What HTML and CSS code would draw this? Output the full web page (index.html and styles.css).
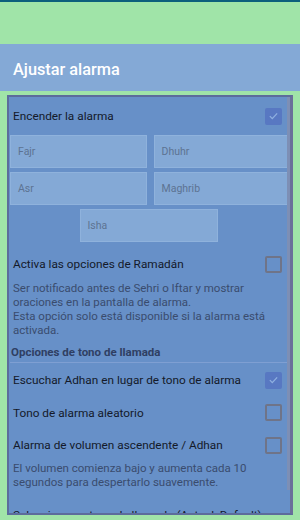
FILE: index.html
```html
<!DOCTYPE html>
<html lang="es">
  <head>
    <meta charset="UTF-8" />
    <meta name="viewport" content="width=device-width, initial-scale=1.0" />
    <title>Ajustar alarma</title>
    <link rel="stylesheet" href="styles.css">
  </head>
  <body>
    <div class="status-line"></div>
    <div class="status-space"></div>
    <header class="app-bar">Ajustar alarma</header>

    <div class="panel">
      <div class="scroll-thumb"></div>

      <div class="row row-first">
        <span class="row-title">Encender la alarma</span>
        <span class="check checked">
          <svg viewBox="0 0 16 16" width="16" height="16"><path d="M3.5 8.2l3 3 6-6.4" fill="none" stroke="#8fb0e0" stroke-width="1.6"/></svg>
        </span>
      </div>

      <div class="prayer-grid">
        <div class="prayer-field">Fajr</div>
        <div class="prayer-field">Dhuhr</div>
        <div class="prayer-field">Asr</div>
        <div class="prayer-field">Maghrib</div>
        <div class="prayer-field single">Isha</div>
      </div>

      <div class="row row-ramadan">
        <span class="row-title">Activa las opciones de Ramadán</span>
        <span class="check"></span>
      </div>
      <p class="summary">Ser notificado antes de Sehri o Iftar y mostrar oraciones en la pantalla de alarma.<br>Esta opción solo está disponible si la alarma está activada.</p>

      <div class="section-title">Opciones de tono de llamada</div>

      <div class="row">
        <span class="row-title">Escuchar Adhan en lugar de tono de alarma</span>
        <span class="check checked">
          <svg viewBox="0 0 16 16" width="16" height="16"><path d="M3.5 8.2l3 3 6-6.4" fill="none" stroke="#8fb0e0" stroke-width="1.6"/></svg>
        </span>
      </div>
      <div class="row row-random">
        <span class="row-title">Tono de alarma aleatorio</span>
        <span class="check"></span>
      </div>
      <div class="row">
        <span class="row-title">Alarma de volumen ascendente / Adhan</span>
        <span class="check"></span>
      </div>
      <p class="summary summary-volume">El volumen comienza bajo y aumenta cada 10 segundos para despertarlo suavemente.</p>

      <div class="row row-tone">
        <span class="row-title">Selecciona un tono de llamada (Actual: Default)</span>
      </div>
    </div>
  </body>
</html>
```

FILE: styles.css
```css
body {
  margin: 0;
  width: 300px;
  height: 520px;
  overflow: hidden;
  background: #a0e4a8;
  font-family: Roboto, "Noto Sans", Arial, sans-serif;
  color: #1b2133;
}

.status-line {
  height: 2px;
  background: #0d5f7c;
}

.status-space {
  height: 42px;
}

.app-bar {
  height: 47px;
  background: #84a9d6;
  color: #fff;
  font-size: 16.3px;
  font-weight: 500;
  padding-left: 13px;
  display: flex;
  align-items: center;
  box-sizing: border-box;
  padding-top: 4px;
}

.panel {
  position: relative;
  margin: 4px 7px 0 7px;
  height: 420px;
  box-sizing: border-box;
  border: 2px solid #5c6c9c;
  border-right: 3px solid #6a6f9a;
  background: #6790c8;
  overflow: hidden;
}

.scroll-thumb {
  position: absolute;
  right: 0;
  top: 0;
  width: 3px;
  height: 393px;
  background: #7d8fb5;
}

.row {
  display: flex;
  align-items: center;
  justify-content: space-between;
  padding: 0 8px 0 4px;
  height: 34px;
  font-size: 11.8px;
}

.row-first {
  padding-top: 2px;
}

.row-title {
  color: #141a2a;
}

.check {
  flex: none;
  width: 13px;
  height: 13px;
  border: 2px solid #6f7488;
  border-radius: 2px;
  display: flex;
  align-items: center;
  justify-content: center;
}

.check.checked {
  border-color: #5878c2;
  background: #5878c2;
}

.prayer-grid {
  display: grid;
  grid-template-columns: 1fr 1fr;
  gap: 4px 7px;
  padding: 2px 0 0 1px;
}

.prayer-field {
  height: 33px;
  box-sizing: border-box;
  background: #84a9d6;
  border: 1px solid #8fb2dc;
  color: #5d7392;
  font-size: 10.5px;
  display: flex;
  align-items: center;
  padding-left: 7px;
}

.prayer-field.single {
  grid-column: 1 / 3;
  justify-self: center;
  width: 138px;
  margin-left: -3px;
}

.row-ramadan {
  margin-top: 5px;
}

.summary {
  margin: 0;
  padding: 0 12px 0 4px;
  font-size: 11.5px;
  line-height: 14px;
  color: #3a4c6e;
}

.section-title {
  margin: 8px 0 0 1px;
  padding: 0 0 3px 1px;
  font-size: 11.5px;
  font-weight: bold;
  color: #2f3f63;
  border-bottom: 1px solid #7f9fd2;
}

.row-random {
  height: 31px;
}

.summary-volume {
  margin-top: -1px;
}

.row-tone {
  margin-top: 9px;
}
```
